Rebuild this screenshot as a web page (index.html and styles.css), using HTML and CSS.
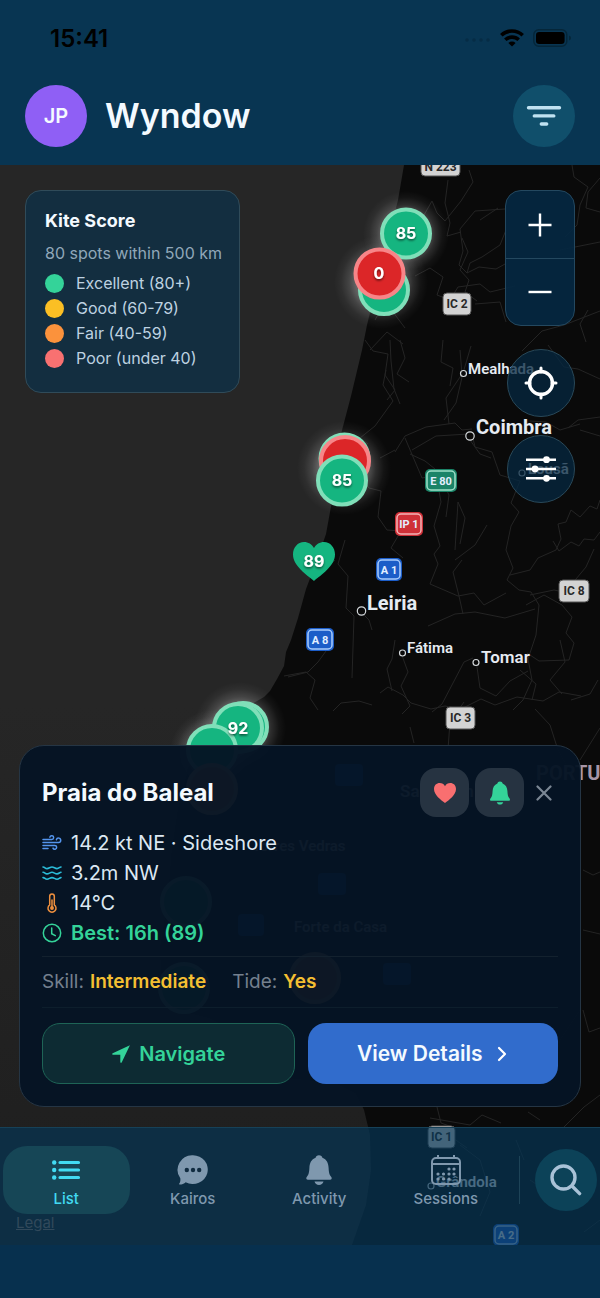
FILE: index.html
```html
<!DOCTYPE html>
<html lang="en">
<head>
<meta charset="utf-8">
<meta name="viewport" content="width=device-width, initial-scale=1">
<title>Wyndow</title>
<link rel="stylesheet" href="styles.css">
</head>
<body>
<div class="app">
  <header class="top">
    <div class="status">
      <span class="clock">15:41</span>
      <span class="status-icons">
        <svg width="28" height="8" viewBox="0 0 28 8" fill="#062c45"><circle cx="4" cy="6" r="1.700"/><circle cx="11" cy="6" r="1.700"/><circle cx="18" cy="6" r="1.700"/><circle cx="25" cy="6" r="1.700"/></svg>
        <svg width="24" height="18" viewBox="0 0 24 18" fill="none" stroke="#000" stroke-width="3.6"><path d="M1.3 6.2a15.6 15.6 0 0 1 21.4 0"/><path d="M5.3 10.8a9.8 9.8 0 0 1 13.4 0"/><path d="M12 17.6l-3.6-3.7a5.2 5.2 0 0 1 7.2 0z" fill="#000" stroke="none"/></svg>
        <svg width="39" height="18" viewBox="0 0 39 18"><rect x=".8" y=".8" width="33" height="16.4" rx="5" fill="none" stroke="#052639" stroke-width="1.4"/><rect x="3" y="3" width="28.600" height="12" rx="3.200"/><path d="M36 6.500q2 .6 2 2.500t-2 2.500z" fill="#052639"/></svg>
      </span>
    </div>
    <div class="brand">
      <button class="avatar" type="button" aria-label="Profile">JP</button>
      <h1>Wyndow</h1>
      <button class="round filter" type="button" aria-label="Filter">
        <svg width="36" height="22" viewBox="0 0 36 22" stroke="#c0e2f1" stroke-width="3.400" stroke-linecap="round"><path d="M2.500 2.700h31M8.300 10.900h19.500M15.300 19h5.400"/></svg>
      </button>
    </div>
  </header>

  <main class="map">
    <svg class="canvas" viewBox="0 165 600 1080" preserveAspectRatio="xMidYMid slice">
      <defs>
        <radialGradient id="glow"><stop offset=".5" stop-color="#fff" stop-opacity=".32"/><stop offset=".68" stop-color="#fff" stop-opacity=".14"/><stop offset=".85" stop-color="#fff" stop-opacity=".04"/><stop offset="1" stop-color="#fff" stop-opacity="0"/></radialGradient>
        <linearGradient id="sea" x1="0" y1="0" x2="0" y2="1"><stop offset=".5" stop-color="#262626"/><stop offset="1" stop-color="#1e1e1e"/></linearGradient>
        <filter id="lift" x="-20%" y="-20%" width="140%" height="160%"><feDropShadow dx="0" dy="1.500" stdDeviation="1" flood-opacity=".6"/></filter>
      </defs>
      <rect y="165" width="600" height="1080" fill="#0a0a0a"/>
      <path fill="url(#sea)" d="M0 165H404L398 200 388 240 378 280 367 325 362 350 351 396 341 434 334 490 326 534 317 560 306 589 298 618 291 640 286 652 284 666 277 679 270 691 264 697 250 705 232 719 206 738 188 768 178 810 172 850 168 900 160 950 163 990 178 1010 210 1018 232 1030 244 1050 258 1068 290 1078 336 1083 356 1093 364 1110 370 1135 371 1170 366 1205 352 1245H0z"/>
      <g class="roads">
        <path d="M416 220l8-5 8-14 5 12 8 8 16-20 12-19-4-12M448 180l-3 23 5 20-3 13 14-4M600 178l-12 14-2 16 14 4"/>
        <path d="M572 165l2 12 14 10-8 18-3 20-12 12M505 209l-30 2-15 18 3 22-4 14 8 8 3-10 12-6 18-12 6-15"/>
        <path d="M467 273l12-6 17 2 9-5M462 238l6 14-8 18 9 10-4 12 12 9M415 276l15-8 13 9-6 18 13 5 8-13 22-3 10 8 25-6"/>
        <path d="M365 340l8 11 15 3-3 21 10 15-8 10M386 370l-3 15 10 16-18 25-15 12 8 6"/>
        <path d="M390 340l1 21 3 28 6 15M400 340l5 18-8 16 12 8M443 340l-2 22 12 6-3 18M460 350l2 24-16 24 3 26"/>
        <path d="M395 452l10-16 21-9 29-4 7 7 10-1M395 450l-15 8M412 450l24-14 32-2M444 420l12-17 7-30 8-27"/>
        <path d="M472 434l3 13 17 5 8 23 20 6-9 22 8 9-8 14-5 24 7 18-6 12 12 10 12 2 8 13-3 30-8 24 4 21-9 20-10 10"/>
        <path d="M470 440l10 14 11 4M410 454l15 7 10 8 6 33-7 24 6 20-6 8 4 10-8 20 28 12 16-3 10 12 22-12"/>
        <path d="M510 575l20-5 8-12 18-8 5-11-3-15 8-2 5-12 9 7 10-11 7 3 3-9M553 541l6 10 12-9 8 4 5-7 10 1 6-8"/>
        <path d="M530 595l24-5 14 3 8-14 10-12 8-18M526 605l18-10 18 10 10 12-6 16 8 10-5 17-30 1-12-8"/>
        <path d="M405 438l17 40 17-3 10 20-3 22M455 550l3-48 7 16-5 26M355 470l14 18 12 3-3 26 9 13 14 1-10 17 12 10"/>
        <path d="M345 540l-7 24 10 12-2 32 8 8-2 62M361 612l8 8 3 10M335 560l-8 7M334 640l-16 22-10 10-20 5"/>
        <path d="M284 676l22-4 9 8-5 18 8 12M400 650l8 22-7 14 9 20-8 8M395 640l-3 19-5 10 5 22M476 660l4 28 16 8 14-15 18-10"/>
        <path d="M333 711l8-8 18-2 13 4M380 693l8-6 15 8 8 8 20 6 14-3 16 3 20-10 14 6 22-8 26 4 16-9 22 4"/>
        <path d="M432 712l10-8 22-42 9-4M535 709l15 16 8 25 12 22M464 702l-14 20-2 27M410 727l4 16M520 670l16 14-4 16M598 680l-8 14-19 6"/>
        <path d="M428 626l27-12 20-2 30 6 30-9M455 560l20-15 12-20M462 560l-9 12 6 24 4 18M560 640l5 22-15 18 12 14"/>
        <path d="M522 351l20-20 22-6 36-14M548 345l16 22 14 2 22 10M568 428l10-8 22-3M530 421l16 1 14 8 20-6"/>
        <path d="M580 760l20-32M583 930l17 4M583 1010l6 22 11-4M583 870l10 5 7-3M437 1107l4 16 14 5-2 10 14 10M430 1118l40 7 12-10 19 8M564 1127l20-20 16-12M528 1112l12 8M524 1160l-8-20"/>
        <path d="M580 1010l-20 30-8 30-20 15M460 1145l20 15 10 32-10 24M600 1220l-16 12M530 1180l30 20 18 2M480 220l18-12M560 250l40-8M588 310l-8 14 6 18"/>
        <path d="M375 320l12-22 16-6M370 350l17-18 16 12M580 430l20 6M506 322l-6-20-25 2M405 280l-12 32 12 16"/>
      </g>

      <g class="town-dot">
        <circle cx="463.500" cy="373.500" r="3"/><circle cx="470" cy="436" r="4.200"/><circle cx="361.500" cy="611" r="4.200"/>
        <circle cx="402.500" cy="653" r="3"/><circle cx="476" cy="662.500" r="3"/><circle cx="522" cy="473" r="3"/><circle cx="431" cy="1186" r="3"/>
      </g>
      <g class="town">
        <text class="small" x="468" y="374">Mealhada</text>
        <text class="large" x="476" y="434">Coimbra</text>
        <text class="small" x="528" y="474">Lousã</text>
        <text class="large" x="367" y="610">Leiria</text>
        <text class="small" x="407" y="653">Fátima</text>
        <text class="medium" x="481" y="663">Tomar</text>
        <text class="large" x="536" y="780" fill="#a796a8">PORTUGAL</text>
        <text class="medium" x="400" y="797">Santarém</text>
        <text class="small" x="252" y="851">Torres Vedras</text>
        <text class="small" x="294" y="932">Forte da Casa</text>
        <text class="small" x="436" y="1187">Grândola</text>
      </g>

      <g class="shield grey">
        <rect x="421" y="155" width="39" height="21" rx="4"/><text x="440.500" y="171">N 223</text>
        <rect x="443" y="293" width="28" height="22" rx="4"/><text x="457" y="308">IC 2</text>
        <rect x="559" y="580" width="30" height="22" rx="4"/><text x="574" y="595">IC 8</text>
        <rect x="446" y="707" width="29" height="22" rx="4"/><text x="460.500" y="722">IC 3</text>
        <rect x="428" y="1126" width="27" height="22" rx="4"/><text x="441.500" y="1141">IC 1</text>
      </g>
      <g class="shield colour">
        <g fill="#1b8468" stroke="#9fe0c8"><rect class="rim" x="425" y="469" width="32" height="23" rx="5"/><rect x="427" y="471" width="28" height="19" rx="4"/></g><text x="441" y="485">E 80</text>
        <g fill="#cf3038" stroke="#f3b3b5"><rect class="rim" x="395" y="512" width="28" height="24" rx="5"/><rect x="397" y="514" width="24" height="20" rx="4"/></g><text x="409" y="528">IP 1</text>
        <g fill="#1c5dc8" stroke="#a9ccfa">
          <rect class="rim" x="376" y="558" width="26" height="23" rx="5"/><rect x="378" y="560" width="22" height="19" rx="4"/>
          <rect class="rim" x="306" y="628" width="28" height="23" rx="5"/><rect x="308" y="630" width="24" height="19" rx="4"/>
          <rect class="rim" x="493" y="1224" width="26" height="22" rx="5"/><rect x="495" y="1226" width="22" height="18" rx="4"/>
          <rect class="rim" x="335" y="764" width="28" height="22" rx="4"/><rect class="rim" x="318" y="873" width="28" height="22" rx="4"/><rect class="rim" x="238" y="914" width="26" height="22" rx="4"/><rect class="rim" x="383" y="963" width="28" height="22" rx="4"/>
        </g>
        <text x="389" y="574">A 1</text><text x="320" y="644">A 8</text><text x="506" y="1239">A 2</text>
      </g>

      <g fill="url(#glow)"><circle cx="406" cy="234" r="43"/><circle cx="381" cy="282" r="47"/><circle cx="344" cy="468" r="47"/><circle cx="240" cy="728" r="46"/><circle cx="212" cy="752" r="42"/></g>
      <g class="pin good"><circle cx="406" cy="233.500" r="24"/><circle cx="384" cy="290" r="24"/></g>
      <g class="pin poor"><circle cx="379.500" cy="273.500" r="24"/></g>
      <g class="pin good"><circle cx="344.500" cy="458.500" r="24"/></g>
      <g class="pin poor"><circle cx="345" cy="461" r="24"/></g>
      <g class="pin good"><circle cx="342" cy="480.500" r="24"/><circle cx="243" cy="727" r="24"/><circle cx="238" cy="728" r="24"/><circle cx="212" cy="750" r="24"/><circle cx="186" cy="902" r="24"/><circle cx="184" cy="988" r="24"/></g>
      <g class="pin fair"><circle cx="212" cy="789" r="24"/><circle cx="315" cy="978" r="24"/></g>
      <path fill="#15b580" d="M314 581C307 575 293 566 293 554.500c0-7 4.700-12.500 11-12.500 4.200 0 8 2.300 10 6 2-3.700 5.800-6 10-6 6.300 0 11 5.500 11 12.500 0 11.500-14 20.500-21 26.500z"/>
      <g class="score" filter="url(#lift)"><text x="406" y="239">85</text><text x="379" y="279">0</text><text x="342" y="486">85</text><text x="314" y="567">89</text><text x="238" y="734">92</text></g>
    </svg>

    <div class="overlay">
      <div class="tools">
        <section class="legend" aria-labelledby="legend-title">
          <h2 id="legend-title">Kite Score</h2>
          <p>80 spots within 500 km</p>
          <ul>
            <li><i class="dot green"></i>Excellent (80+)</li>
            <li><i class="dot yellow"></i>Good (60-79)</li>
            <li><i class="dot orange"></i>Fair (40-59)</li>
            <li><i class="dot red"></i>Poor (under 40)</li>
          </ul>
        </section>
        <div class="controls">
          <div class="zoom">
            <button type="button" aria-label="Zoom in"><svg width="24" height="24" viewBox="0 0 24 24" stroke="#fff" stroke-width="2.400"><path d="M12 .5v23M.5 12h23"/></svg></button>
            <button type="button" aria-label="Zoom out"><svg width="24" height="24" viewBox="0 0 24 24" stroke="#fff" stroke-width="2.400"><path d="M.5 12h23"/></svg></button>
          </div>
          <button class="disc" type="button" aria-label="My location"><svg width="34" height="34" viewBox="0 0 34 34" fill="none" stroke="#fff" stroke-width="3.400"><circle cx="17" cy="17" r="11.500"/><path stroke-width="3" stroke-linecap="round" d="M17 2v4M17 28v4M2 17h4M28 17h4"/></svg></button>
          <button class="disc" type="button" aria-label="Map options"><svg width="30" height="26" viewBox="0 0 30 26" fill="#fff" stroke="#fff" stroke-width="2.400"><path d="M0 3.700h30M0 13h30M0 22.300h30"/><g stroke="none"><circle cx="20.500" cy="3.700" r="3.400"/><circle cx="9" cy="13" r="3.400"/><circle cx="20.500" cy="22.300" r="3.400"/></g></svg></button>
        </div>
      </div>

      <article class="card">
        <div class="card-head">
          <h2>Praia do Baleal</h2>
          <button class="tile" type="button" aria-label="Favourite"><svg width="24" height="22" viewBox="0 0 24 22" fill="#f96f70"><path d="M12 21C8 18 1 13 1 7 1 3.300 3.600 1 6.700 1 9 1 11 2.200 12 4.200 13 2.200 15 1 17.300 1 20.400 1 23 3.300 23 7c0 6-7 11-11 14z"/></svg></button>
          <button class="tile" type="button" aria-label="Alerts"><svg width="22" height="24" viewBox="0 0 22 24" fill="#34d399"><path d="M11 .5c1.500 0 2.400.8 2.600 2 3 1.200 4.600 3.700 4.800 7.500.2 4 .6 5.500 2 7.200 1 1.300.7 2.600-.8 2.600H2.400c-1.500 0-1.800-1.300-.8-2.600 1.400-1.700 1.800-3.200 2-7.200.2-3.800 1.800-6.300 4.800-7.500.2-1.200 1.100-2 2.600-2zM7.800 21.200h6.400c-.4 1.600-1.600 2.400-3.200 2.400s-2.800-.8-3.200-2.400z"/></svg></button>
          <button class="close" type="button" aria-label="Close"><svg width="16" height="16" viewBox="0 0 16 16" stroke="#7b8794" stroke-width="2.200" stroke-linecap="round"><path d="M1.500 1.500l13 13M14.500 1.500l-13 13"/></svg></button>
        </div>
        <ul class="facts">
          <li><svg width="20" height="20" viewBox="0 0 20 20" fill="none" stroke="#5495ed" stroke-width="1.500" stroke-linecap="round"><path d="M1 6.500h8.800a1.900 1.900 0 1 0-1.900-2.300M1 9.500h15.600a2.200 2.200 0 1 0-2.200-2.800M1 12.500h11.800a1.900 1.900 0 1 1-1.800 2.600M1 15.500h5"/></svg>14.2 kt NE · Sideshore</li>
          <li><svg width="20" height="20" viewBox="0 0 20 20" fill="none" stroke="#2bbcd8" stroke-width="1.600" stroke-linecap="round" stroke-linejoin="round"><path d="M1 4c2 0 2 1.600 4 1.600S8 4 10 4s3 1.600 5 1.600S17.500 4 19 4M1 9.300c2 0 2 1.600 4 1.600s3-1.600 5-1.600 3 1.600 5 1.600 2.500-1.600 4-1.600M1 14.600c2 0 2 1.600 4 1.600s3-1.600 5-1.600 3 1.600 5 1.600 2.500-1.600 4-1.600"/></svg>3.2m NW</li>
          <li><svg width="20" height="20" viewBox="0 0 20 20" fill="none" stroke="#ef903e" stroke-width="1.500" stroke-linecap="round"><path d="M7.700 3.200a2.300 2.300 0 0 1 4.600 0v8.700a4 4 0 1 1-4.600 0zM10 7v7"/><circle cx="10" cy="15" r="1.200" fill="#ef903e"/></svg>14°C</li>
          <li class="best"><svg width="20" height="20" viewBox="0 0 20 20" fill="none" stroke="#34d399" stroke-width="1.500" stroke-linecap="round"><circle cx="10" cy="10" r="8.700"/><path d="M9.700 5v5.700l3.600 2"/></svg>Best: 16h (89)</li>
        </ul>
        <dl class="meta">
          <div><dt>Skill:</dt><dd>Intermediate</dd></div>
          <div><dt>Tide:</dt><dd>Yes</dd></div>
        </dl>
        <div class="actions">
          <button class="navigate" type="button"><svg width="20" height="20" viewBox="0 0 20 20" fill="#34d399"><path d="M18.900 1.200 10.800 18.300c-.4.900-1.500.7-1.500-.3v-7.300H2c-1 0-1.200-1.100-.3-1.500z"/></svg>Navigate</button>
          <button class="details" type="button">View Details<svg width="12" height="16" viewBox="0 0 12 16" fill="none" stroke="#fff" stroke-width="2.200" stroke-linecap="round" stroke-linejoin="round"><path d="M3 2l6 6-6 6"/></svg></button>
        </div>
      </article>

      <nav class="tabbar">
        <div class="tabs">
          <a class="tab active" href="#list"><svg width="32" height="32" viewBox="0 0 32 32" fill="#42daf2" stroke="#42daf2" stroke-width="3.200" stroke-linecap="round"><path d="M10 8.500h18.500M10 16h18.500M10 23.500h18.500"/><g stroke="none"><circle cx="4.200" cy="8.500" r="2.200"/><circle cx="4.200" cy="16" r="2.200"/><circle cx="4.200" cy="23.500" r="2.200"/></g></svg>List</a>
          <a class="tab" href="#kairos"><svg width="32" height="32" viewBox="0 0 32 32" fill="#7f98ae"><path d="M16 1.200a15 14.400 0 1 1-7.300 27.100c-1.500 1.500-4 2.300-5.800 2.300-.8 0-1-.8-.5-1.300.9-1 1.200-3.200.9-5.100A14.600 14.600 0 0 1 16 1.200z"/><g fill="#112c40"><circle cx="9.800" cy="16" r="2.200"/><circle cx="16" cy="16" r="2.200"/><circle cx="22.200" cy="16" r="2.200"/></g></svg>Kairos</a>
          <a class="tab" href="#activity"><svg width="32" height="32" viewBox="0 0 32 32" fill="#7f98ae"><path d="M16 1.200c2 0 3.100 1.200 3.400 2.600 4.300 1.700 6 5.200 6.200 10 .2 5.200.9 7 2.500 9 1.200 1.400.7 3-1.200 3H5.100c-1.900 0-2.400-1.600-1.200-3 1.600-2 2.300-3.800 2.500-9 .2-4.800 1.900-8.300 6.200-10 .3-1.400 1.400-2.600 3.400-2.600zM11.500 27.500h9c-.6 2.200-2.300 3.400-4.500 3.400s-3.900-1.200-4.500-3.400z"/></svg>Activity</a>
          <a class="tab" href="#sessions"><svg width="32" height="32" viewBox="0 0 32 32" fill="none" stroke="#7f98ae" stroke-width="2"><rect x="2" y="4" width="28" height="26" rx="4"/><path d="M2 10h28M8 1v4M24 1v4"/><path stroke-width="3.200" stroke-linecap="round" d="M19 15h.01M24 15h.01M8 20h.01M13.500 20h.01M19 20h.01M24 20h.01M8 25h.01M13.500 25h.01M19 25h.01"/></svg>Sessions</a>
          <span class="rule"></span>
          <button class="round search" type="button" aria-label="Search"><svg width="32" height="32" viewBox="0 0 32 32" fill="none" stroke="#a9c2d7" stroke-width="3.400" stroke-linecap="round"><circle cx="13.500" cy="13.500" r="11.500"/><path d="M22 22l7.600 7.600"/></svg></button>
        </div>
        <a class="legal" href="#legal">Legal</a>
      </nav>
    </div>
  </main>
  <footer class="home-strip"></footer>
</div>
</body>
</html>
```
FILE: styles.css
```css
* { box-sizing: border-box; }

body {
  margin: 0;
  background: #07304e;
  color: #f4faff;
  font-family: Inter, "Liberation Sans", sans-serif;
}

h1, h2, p, ul, dl, dd { margin: 0; padding: 0; }
ul { list-style: none; }
svg { display: block; flex: none; }

button {
  display: flex;
  align-items: center;
  justify-content: center;
  padding: 0;
  border: 0;
  background: none;
  color: inherit;
  font: inherit;
  cursor: pointer;
}

.app {
  display: flex;
  flex-direction: column;
  min-height: 100vh;
}

/* Header */
.top {
  padding: 24px 25px 18px;
  background: #083552;
}

.status {
  display: flex;
  align-items: center;
  justify-content: space-between;
  height: 28px;
  margin-bottom: 33px;
  padding: 0 3px 0 25px;
}

.clock {
  color: #000;
  font-size: 24px;
  font-weight: 600;
}

.status-icons {
  display: flex;
  align-items: center;
  gap: 9px;
}

.brand {
  display: flex;
  align-items: center;
  gap: 18px;
}

.brand h1 {
  flex: 1;
  font-size: 34px;
  font-weight: 600;
  line-height: 40px;
}

.avatar, .round {
  flex: none;
  width: 62px;
  height: 62px;
  border-radius: 50%;
}

.avatar {
  background: #8f5ff5;
  font-size: 20px;
  font-weight: 600;
}

.round { background: #104f6b; }

/* Map */
.map {
  position: relative;
  display: flex;
  flex: 1;
  overflow: hidden;
  background: #0a0a0a;
}

.canvas {
  position: absolute;
  inset: 0;
  width: 100%;
  height: 100%;
}

.roads {
  fill: none;
  stroke: #242424;
  stroke-width: 1;
  stroke-linejoin: round;
}

.town-dot { fill: #0a0a0a; stroke: #d4d8db; stroke-width: 1.2; }

.town {
  fill: #e6ebf2;
  font-family: Roboto, sans-serif;
  font-weight: 600;
}

.small { font-size: 15px; }
.medium { font-size: 17px; }
.large { font-size: 20px; font-weight: 700; }

.shield text {
  font: 700 11px Roboto, sans-serif;
  text-anchor: middle;
}

.grey rect { fill: #d3d3d3; stroke: #555; }
.shield.grey text { fill: #292929; font-size: 12px; }
.colour rect { stroke-width: 1.5; }
.colour text { fill: #e3efff; }
.colour .rim { stroke: none; }

.pin circle { stroke-width: 4; }
.good circle { fill: #15b580; stroke: #80dfb9; }
.poor circle { fill: #dc2628; stroke: #f78588; }
.fair circle { fill: #f98d3b; stroke: #fdba74; }

.score {
  fill: #fff;
  font-size: 16px;
  font-weight: 700;
  text-anchor: middle;
}

.overlay {
  position: relative;
  display: flex;
  flex: 1;
  flex-direction: column;
  justify-content: space-between;
  min-width: 0;
}

.tools {
  display: flex;
  align-items: flex-start;
  justify-content: space-between;
  padding: 25px;
}

.legend {
  padding: 18px 17px 21px 19px;
  border: 1px solid #304b59;
  border-radius: 16px;
  background: #132e40;
}

.legend h2 {
  font-size: 18px;
  font-weight: 700;
  line-height: 24px;
}

.legend p {
  margin: 10px 0 8px;
  color: #90a7b9;
  font-size: 16px;
  line-height: 20px;
}

.legend li {
  display: flex;
  align-items: center;
  gap: 12px;
  color: #bed2e1;
  font-size: 16px;
  line-height: 25px;
}

.dot {
  width: 19px;
  height: 19px;
  border-radius: 50%;
}

.green { background: #34d399; }
.yellow { background: #fbbf24; }
.orange { background: #fb923c; }
.red { background: #f87171; }

.controls {
  display: flex;
  flex-direction: column;
  align-items: flex-end;
}

.zoom {
  width: 70px;
  margin-bottom: 23px;
  border: 1px solid #24485f;
  border-radius: 16px;
  background: rgba(5, 39, 65, 0.94);
}

.zoom button {
  width: 100%;
  height: 67px;
}

.zoom button + button { border-top: 1px solid #24485f; }

.disc {
  width: 68px;
  height: 68px;
  margin-bottom: 18px;
  border: 1px solid #294858;
  border-radius: 50%;
  background: rgba(5, 39, 65, 0.76);
}

/* Spot card */
.card {
  margin: auto 19px 20px;
  padding: 22px;
  border: 1px solid #253544;
  border-radius: 25px;
  background: rgba(5, 20, 36, 0.97);
}

.card-head {
  display: flex;
  align-items: center;
  gap: 6px;
  margin-bottom: 11px;
}

.card-head h2 {
  flex: 1;
  font-size: 24px;
  font-weight: 700;
  line-height: 30px;
}

.tile {
  width: 49px;
  height: 49px;
  border-radius: 16px;
  background: #263341;
}

.close {
  width: 28px;
  height: 48px;
}

.facts li {
  display: flex;
  align-items: center;
  gap: 9px;
  color: #dce8f3;
  font-size: 20px;
  line-height: 30px;
}

.facts .best {
  color: #34d399;
  font-weight: 600;
}

.meta {
  display: flex;
  gap: 26px;
  margin: 8px 0 15px;
  padding: 12px 0;
  border-top: 1px solid #13212e;
  border-bottom: 1px solid #0d1e2c;
  font-size: 19px;
  line-height: 26px;
}

.meta div { display: flex; gap: 6px; }
.meta dt { color: #74808e; }
.meta dd { color: #f4bf32; font-weight: 600; }

.actions {
  display: flex;
  gap: 13px;
}

.actions button {
  flex: 1;
  height: 61px;
  border-radius: 18px;
  font-size: 20px;
  font-weight: 600;
}

.actions .navigate {
  gap: 8px;
  border: 1px solid #1e6456;
  background: #0d2b33;
  color: #34d399;
}

.actions .details {
  gap: 14px;
  background: #316ccc;
  font-size: 21px;
}

/* Tab bar */
.tabbar {
  padding: 18px 3px 14px;
  border-top: 1px solid #164158;
  background: rgba(5, 52, 84, 0.7);
}

.tabs {
  display: flex;
  align-items: center;
}

.tab {
  display: flex;
  flex: 1;
  flex-direction: column;
  align-items: center;
  gap: 4px;
  padding: 8px 0 6px;
  border-radius: 24px;
  color: #7f98ae;
  font-size: 15px;
  font-weight: 500;
  line-height: 18px;
  text-decoration: none;
}

.tab.active {
  background: #164656;
  color: #42daf2;
}

.rule {
  width: 1px;
  height: 48px;
  margin: 0 15px 0 10px;
  background: #1d4357;
}

.search { background: #0c4258; }

.legal {
  display: block;
  width: fit-content;
  margin-left: 13px;
  color: #31495b;
  font-size: 15px;
  line-height: 17px;
}

.home-strip {
  height: 53px;
  background: #07304e;
}
```
